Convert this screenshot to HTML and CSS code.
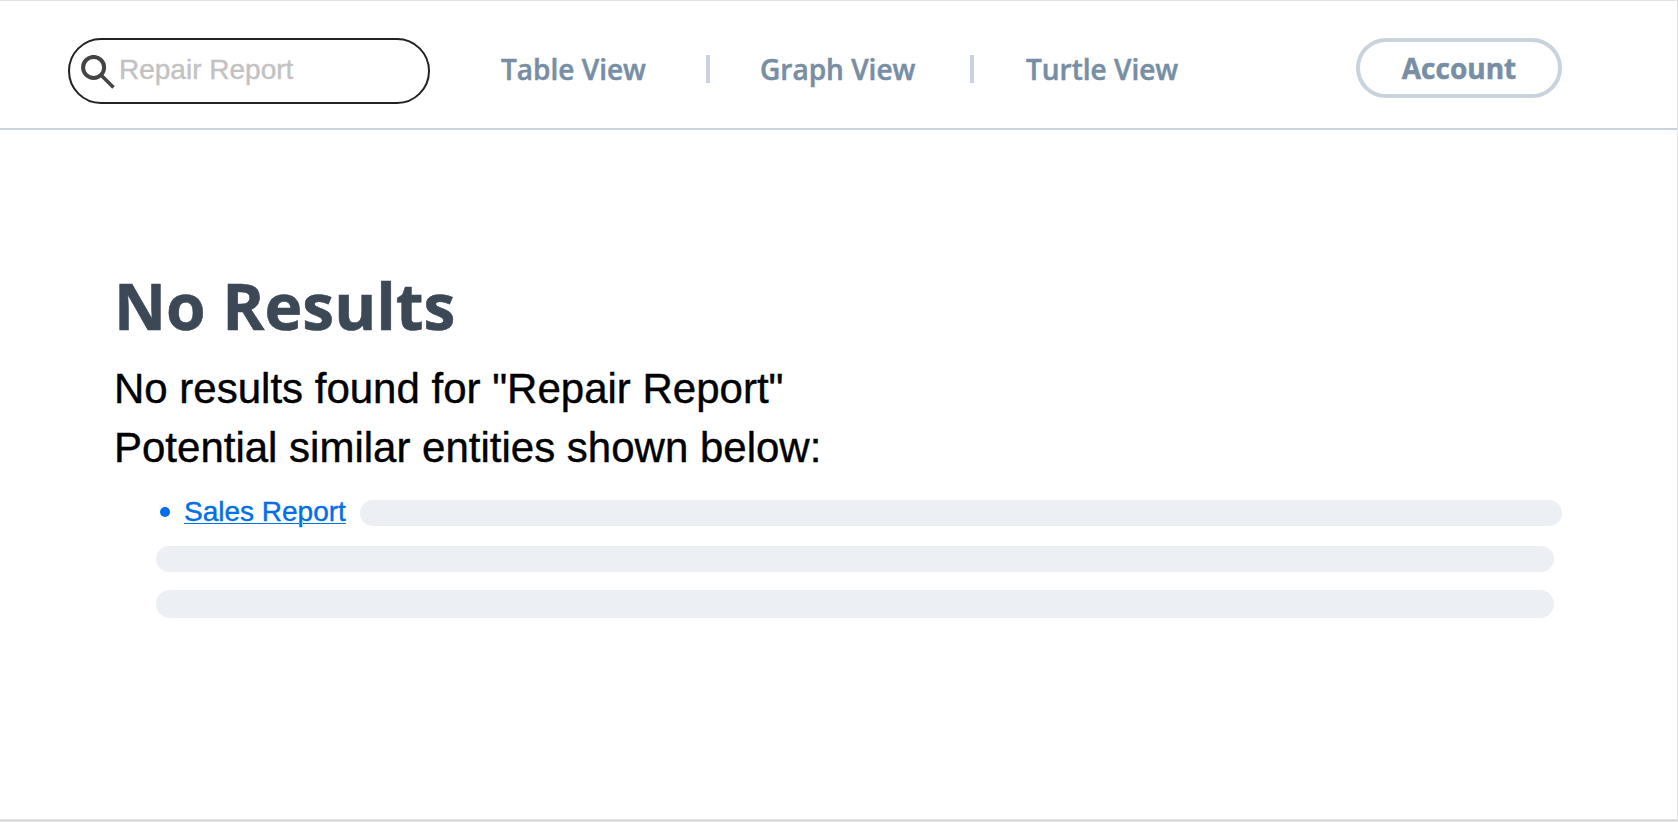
FILE: index.html
```html
<!DOCTYPE html>
<html lang="en">
<head>
<meta charset="utf-8">
<title>No Results</title>
<link rel="stylesheet" href="styles.css">
</head>
<body>
<div class="window">
  <header class="header">
    <label class="search">
      <svg class="search-icon" width="36" height="36" viewBox="0 0 36 36" fill="none" stroke="#444">
        <circle cx="12.6" cy="12.4" r="10.5" stroke-width="4"/>
        <path d="M20.5 20.5L32.5 32.5" stroke-width="3.6"/>
      </svg>
      <span class="search-text">Repair Report</span>
    </label>
    <nav class="nav">
      <a class="tab tab-table">Table View</a>
      <span class="divider"></span>
      <a class="tab tab-graph">Graph View</a>
      <span class="divider"></span>
      <a class="tab tab-turtle">Turtle View</a>
    </nav>
    <button class="account">Account</button>
  </header>
  <main class="results">
    <h1 class="title">No Results</h1>
    <p class="message message-query">No results found for "Repair Report"</p>
    <p class="message message-similar">Potential similar entities shown below:</p>
    <div class="entity">
      <span class="bullet"></span>
      <a class="entity-link" href="#">Sales Report</a>
      <span class="bar bar-inline"></span>
    </div>
    <div class="bar bar-second"></div>
    <div class="bar bar-third"></div>
  </main>
  <div class="window-edge"></div>
</div>
</body>
</html>
```

FILE: styles.css
```css
* { box-sizing: border-box; }
body {
  margin: 0;
  background: #fff;
  font-family: "Liberation Sans", Arial, sans-serif;
}
.window {
  display: flex;
  flex-direction: column;
  height: 822px;
  overflow: hidden;
  border-top: 1px solid #e2e2e2;
  border-right: 1px solid #e2e2e2;
}
.window-edge {
  height: 3px;
  margin-top: auto;
  border: 1px solid #e6e6e6;
  border-width: 1px 0;
  background: #d4d4d4;
}
.header {
  display: flex;
  flex: none;
  align-items: flex-start;
  height: 129px;
  padding: 37px 115px 0 68px;
  border-bottom: 2px solid #c8d3de;
}
.search {
  display: flex;
  align-items: flex-start;
  width: 362px;
  height: 66px;
  padding: 15px 0 0 11px;
  border: 2px solid #222;
  border-radius: 33px;
}
.search-icon { flex: none; }
.search-text {
  margin: -1px 0 0 2px;
  color: #c2c2c2;
  font-size: 28px;
  line-height: 32px;
  white-space: nowrap;
  -webkit-text-stroke: 0.4px;
}
.nav {
  display: flex;
  width: 700px;
  margin-left: 71px;
  padding-top: 11px;
}
.tab {
  margin-top: 1px;
  color: #788ea5;
  font: 600 28px/38px "Open Sans", sans-serif;
  white-space: nowrap;
  -webkit-text-stroke: 0.5px;
}
.tab-table { width: 205px; }
.tab-graph { width: 210px; margin-left: 50px; }
.tab-turtle { margin-left: 52px; }
.divider {
  flex: none;
  width: 4px;
  height: 28px;
  margin-top: 6px;
  background: #c8d3de;
}
.account {
  width: 206px;
  height: 60px;
  margin-left: auto;
  padding: 0;
  border: 4px solid #c8d3de;
  border-radius: 30px;
  background: #fff;
  color: #788ea5;
  font: 700 28px/38px "Open Sans", sans-serif;
  -webkit-text-stroke: 0.5px;
}
.results { padding: 131px 115px 0 114px; }
.title {
  margin: 0;
  color: #3c4856;
  font: 700 64px/90px "Open Sans", sans-serif;
  -webkit-text-stroke: 0.6px;
}
.message {
  margin: 0;
  color: #000;
  font-size: 42px;
  line-height: 59px;
  white-space: nowrap;
  -webkit-text-stroke: 0.4px;
}
.message-query { margin-top: 8px; }
.entity {
  display: flex;
  align-items: center;
  height: 26px;
  margin: 23px 0 0 46px;
}
.bullet {
  width: 10px;
  height: 10px;
  margin-top: -2px;
  border-radius: 50%;
  background: #006fe8;
}
.entity-link {
  width: 176px;
  margin: -3px 0 0 14px;
  color: #006fe8;
  font-size: 28px;
  line-height: 32px;
  white-space: nowrap;
  text-decoration-thickness: 1px;
  text-underline-offset: 2px;
  -webkit-text-stroke: 0.4px;
}
.bar {
  height: 26px;
  border-radius: 14px;
  background: #ecf0f5;
}
.bar-inline { flex: 1; }
.bar-second { margin: 20px 8px 0 42px; }
.bar-third { height: 28px; margin: 18px 8px 0 42px; }
```
